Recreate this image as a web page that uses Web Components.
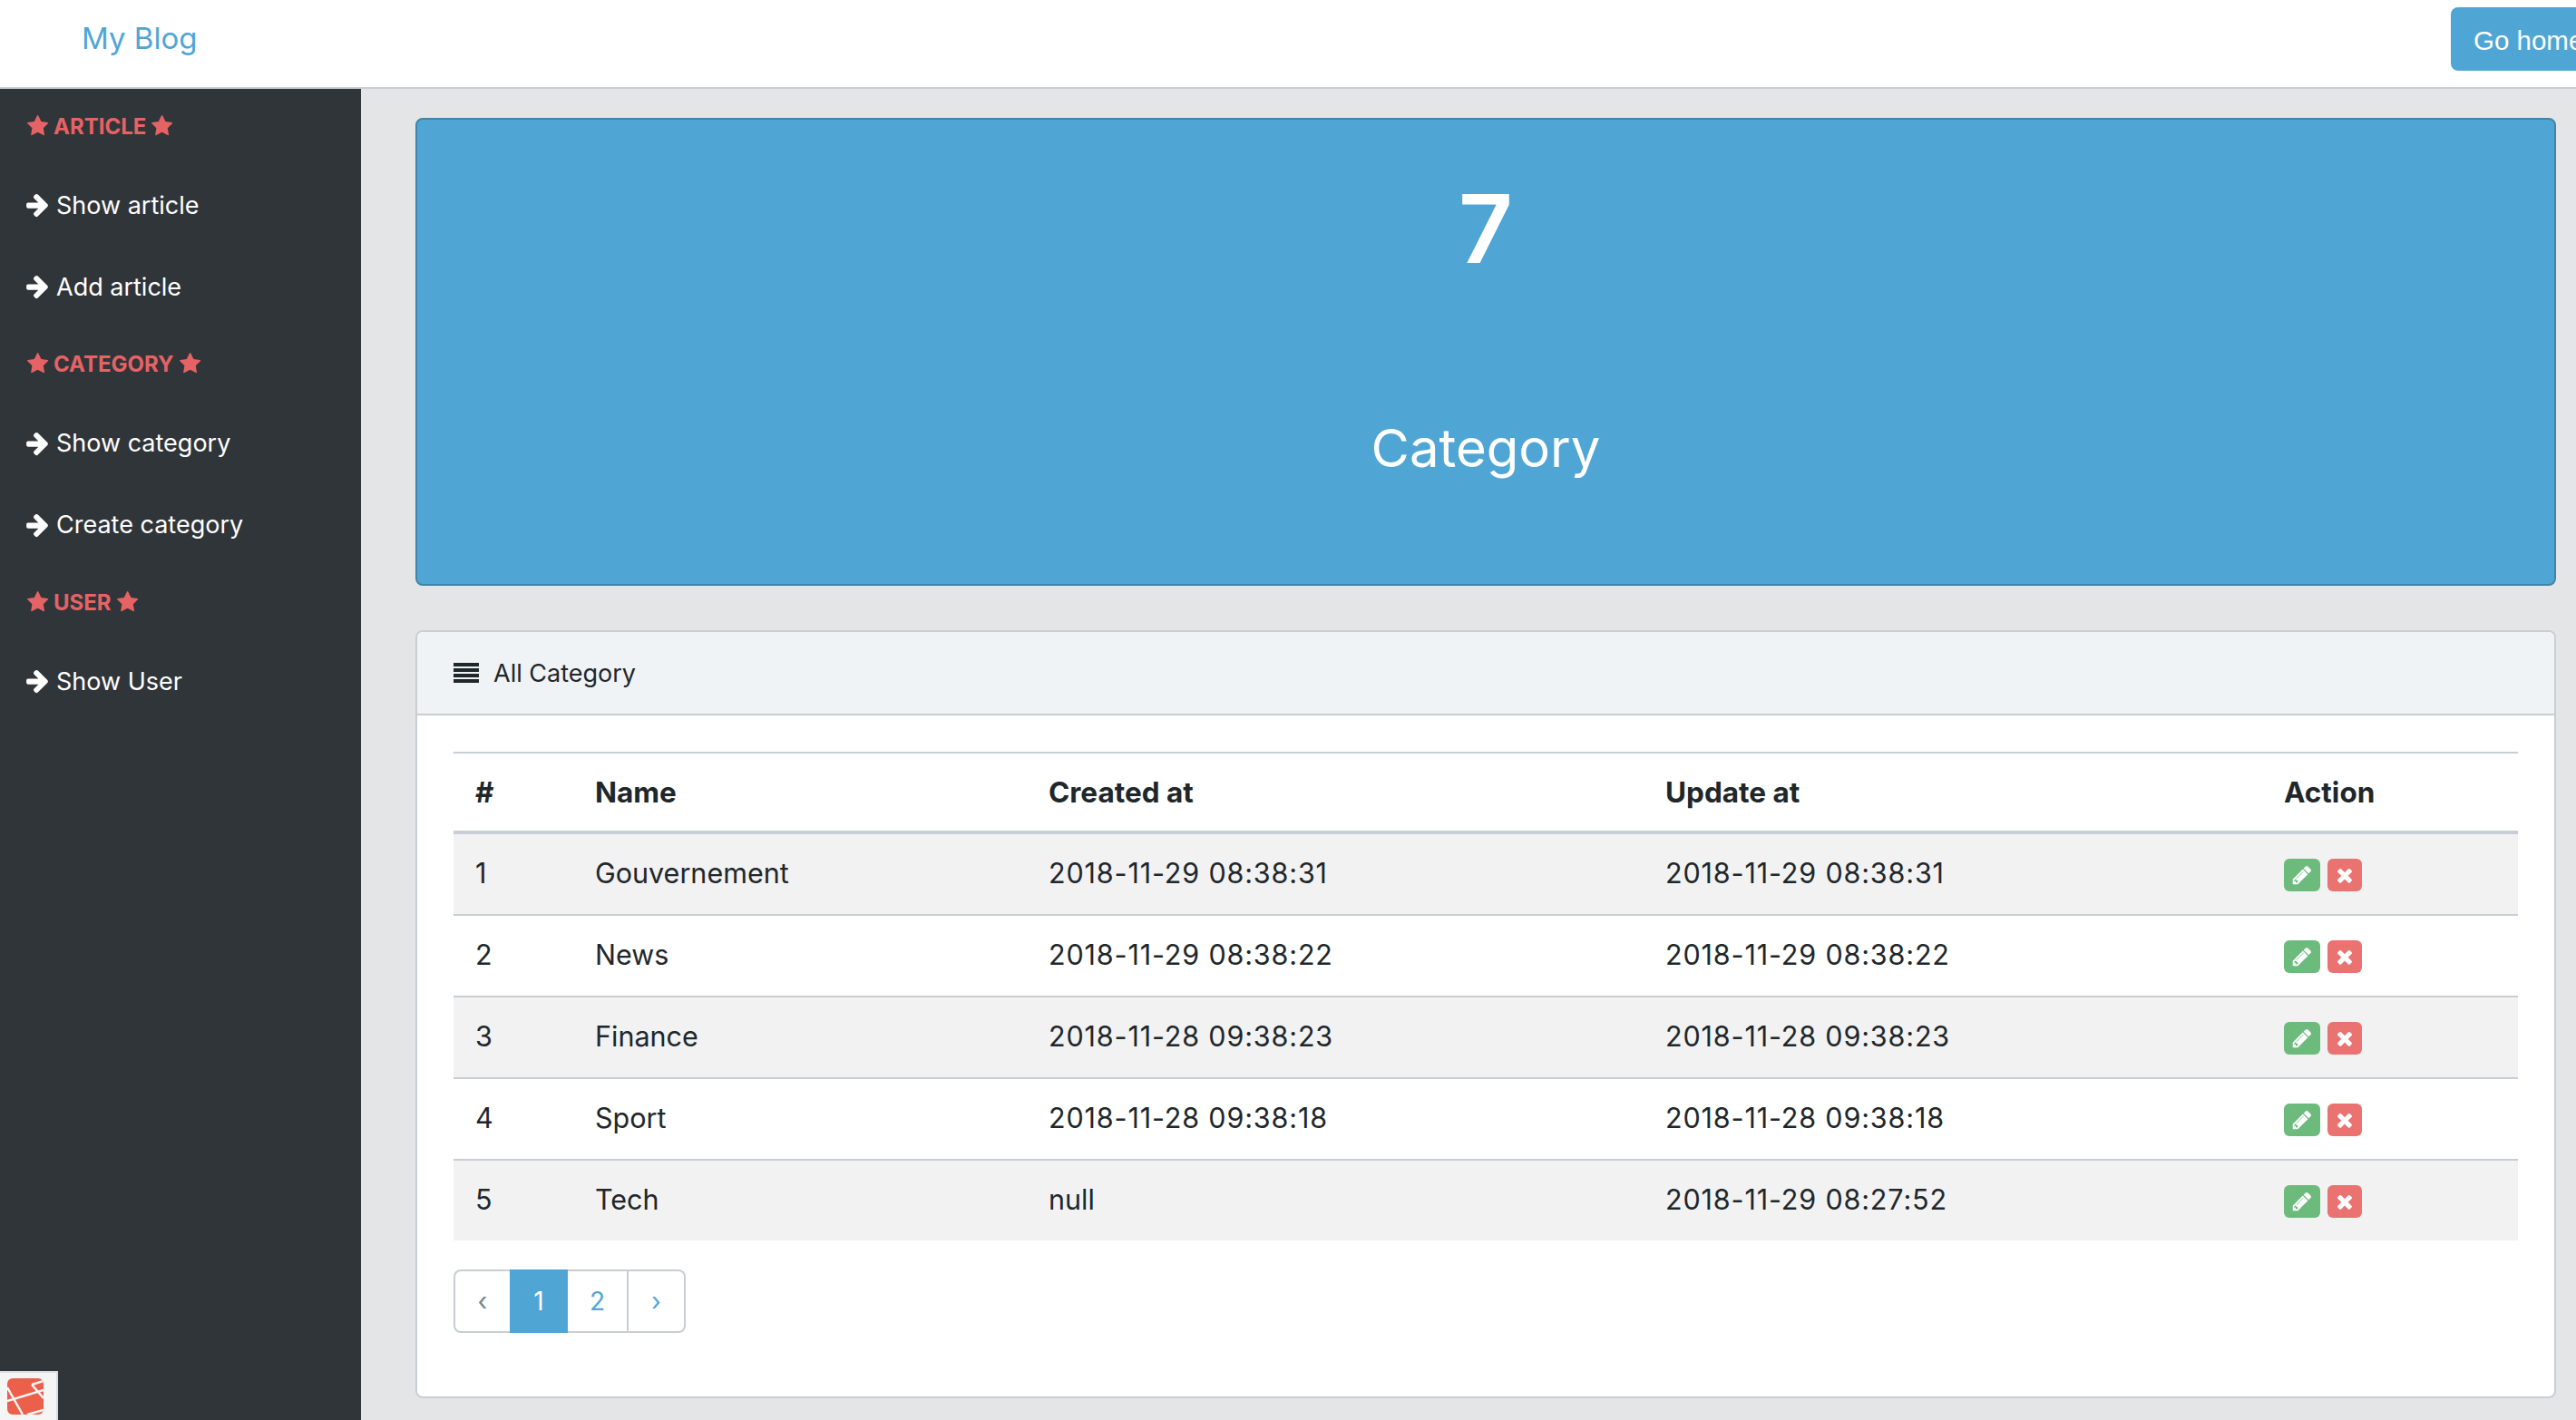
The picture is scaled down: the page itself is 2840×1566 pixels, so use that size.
<!DOCTYPE html>
<html lang="en">
<head>
<meta charset="utf-8">
<title>My Blog</title>
<style>
  html, body { margin: 0; height: 100%; overflow: hidden; }
  body { font-family: Inter, "Liberation Sans", sans-serif; background: #e4e5e6; color: #20272b; }
  .layout { display: flex; height: 1468px; }
</style>
</head>
<body>
<blog-header></blog-header>
<div class="layout">
  <blog-sidebar>
    <nav-title>ARTICLE</nav-title>
    <nav-link>Show article</nav-link>
    <nav-link>Add article</nav-link>
    <nav-title>CATEGORY</nav-title>
    <nav-link>Show category</nav-link>
    <nav-link>Create category</nav-link>
    <nav-title>USER</nav-title>
    <nav-link>Show User</nav-link>
  </blog-sidebar>
  <blog-main>
    <stat-hero value="7" label="Category"></stat-hero>
    <category-card></category-card>
  </blog-main>
</div>
<debug-tab></debug-tab>

<script>
const ICONS = {
  star: 'M1664 615q0 22-26 48l-363 354 86 500q1 7 1 20 0 21-10.500 35.500t-30.500 14.500q-19 0-40-12l-449-236-449 236q-22 12-40 12-21 0-31.500-14.500t-10.500-35.500q0-6 2-20l86-500-364-354q-25-27-25-48 0-37 56-46l502-73 225-455q19-41 49-41t49 41l225 455 502 73q56 9 56 46z',
  arrow: 'M1600 960q0 54-37 91l-651 651q-39 37-91 37-51 0-90-37l-75-75q-38-38-38-91t38-91l293-293h-704q-52 0-84.500-37.500t-32.500-90.500v-128q0-53 32.500-90.500t84.500-37.500h704l-293-294q-38-36-38-90t38-90l75-75q38-38 90-38 53 0 91 38l651 651q37 35 37 90z',
  pencil: 'M491 1536l91-91-235-235-91 91v107h128v128h107zm523-928q0-22-22-22-10 0-17 7l-542 542q-7 7-7 17 0 22 22 22 10 0 17-7l542-542q7-7 7-17zm-54-192l416 416-832 832h-416v-416zm683 96q0 53-37 90l-166 166-416-416 166-165q36-38 90-38 53 0 91 38l235 234q37 39 37 91z',
  times: 'M1490 1322q0 40-28 68l-136 136q-28 28-68 28t-68-28l-294-294-294 294q-28 28-68 28t-68-28l-136-136q-28-28-28-68t28-68l294-294-294-294q-28-28-28-68t28-68l136-136q28-28 68-28t68 28l294 294 294-294q28-28 68-28t68 28l136 136q28 28 28 68t-28 68l-294 294 294 294q28 28 28 68z',
};

function icon(name, size) {
  return `<svg width="${size}" height="${size}" viewBox="0 0 1792 1792" aria-hidden="true"><path fill="currentColor" d="${ICONS[name]}"/></svg>`;
}

class BlogHeader extends HTMLElement {
  constructor() {
    super();
    this.attachShadow({ mode: 'open' });
    this.shadowRoot.innerHTML = `
      <style>
        :host { display: flex; align-items: center; height: 96px; background: #fff; border-bottom: 2px solid #c8ced3; overflow: hidden; }
        .brand { margin-left: 90px; margin-top: -12px; font-size: 33px; color: #4ea6d5; }
        .btn { margin-left: auto; margin-right: -40px; margin-top: -10px; flex: none; width: 178px; height: 70px; box-sizing: border-box; padding-left: 25px; line-height: 74px; background: #4fa6d5; color: #fff; font-size: 29.500px; border-radius: 8px 0 0 8px; white-space: nowrap; font-family: "Liberation Sans", Arial, sans-serif; }
      </style>
      <span class="brand">My Blog</span>
      <span class="btn">Go home</span>
    `;
  }
}

class BlogSidebar extends HTMLElement {
  constructor() {
    super();
    this.attachShadow({ mode: 'open' });
    this.shadowRoot.innerHTML = `
      <style>
        :host { display: flex; flex-direction: column; flex: none; width: 398px; background: #303539; box-sizing: border-box; }
      </style>
      <slot></slot>
    `;
  }
}

class NavTitle extends HTMLElement {
  constructor() {
    super();
    this.attachShadow({ mode: 'open' });
    this.shadowRoot.innerHTML = `
      <style>
        :host { display: flex; align-items: center; gap: 4px; height: 82.600px; padding-left: 30px; color: #e56365; font-size: 24px; font-weight: 700; }
        svg + span + svg { margin-left: 2px; }
      </style>
      ${icon('star', 25)}<span><slot></slot></span>${icon('star', 25)}
    `;
  }
}

class NavLink extends HTMLElement {
  constructor() {
    super();
    this.attachShadow({ mode: 'open' });
    this.shadowRoot.innerHTML = `
      <style>
        :host { display: flex; align-items: center; gap: 6px; height: 90px; padding-left: 27px; color: #fff; font-size: 27px; }
        span { padding-top: 1px; }
      </style>
      ${icon('arrow', 29)}<span><slot></slot></span>
    `;
  }
}

class BlogMain extends HTMLElement {
  constructor() {
    super();
    this.attachShadow({ mode: 'open' });
    this.shadowRoot.innerHTML = `
      <style>
        :host { display: flex; flex-direction: column; flex: 1; gap: 49px; padding: 32px 22px 0 60px; min-width: 0; box-sizing: border-box; }
      </style>
      <slot></slot>
    `;
  }
}

class StatHero extends HTMLElement {
  constructor() {
    super();
    this.attachShadow({ mode: 'open' });
    const value = this.getAttribute('value');
    const label = this.getAttribute('label');
    this.shadowRoot.innerHTML = `
      <style>
        :host { display: flex; flex-direction: column; align-items: center; height: 516px; background: #4fa6d5; border: 2px solid #3f85aa; border-radius: 8px; box-sizing: border-box; color: #fff; }
        .value { margin-top: 60px; font-size: 104px; line-height: 120px; font-weight: 600; }
        .label { margin-top: 132px; font-size: 58px; line-height: 100px; }
      </style>
      <div class="value">${value}</div>
      <div class="label">${label}</div>
    `;
  }
}

class CategoryCard extends HTMLElement {
  constructor() {
    super();
    this.attachShadow({ mode: 'open' });
    const rows = [
      ['1', 'Gouvernement', '2018-11-29 08:38:31', '2018-11-29 08:38:31'],
      ['2', 'News', '2018-11-29 08:38:22', '2018-11-29 08:38:22'],
      ['3', 'Finance', '2018-11-28 09:38:23', '2018-11-28 09:38:23'],
      ['4', 'Sport', '2018-11-28 09:38:18', '2018-11-28 09:38:18'],
      ['5', 'Tech', 'null', '2018-11-29 08:27:52'],
    ];
    const body = rows.map(r => `
      <div class="row">
        ${r.map(c => `<div class="cell text${c.length > 10 && c.startsWith('2018') ? ' date' : ''}">${c}</div>`).join('')}
        <div class="cell actions">
          <span class="act edit">${icon('pencil', 24)}</span>
          <span class="act del">${icon('times', 24)}</span>
        </div>
      </div>`).join('');
    this.shadowRoot.innerHTML = `
      <style>
        :host { display: block; height: 847px; background: #fff; border: 2px solid #c8ced3; border-radius: 8px; box-sizing: border-box; font-size: 30.500px; }
        .head { display: flex; align-items: center; gap: 16px; height: 90px; padding: 0 0 0 40px; background: #f0f3f5; border-bottom: 2px solid #c8ced3; border-radius: 6px 6px 0 0; font-size: 27px; }
        .bars { display: grid; gap: 2px; width: 28px; }
        .bars i { display: block; height: 4px; background: #20272b; }
        .body { padding: 40px 40px 0; }
        .table { border-top: 2px solid #c8ced3; }
        .row { display: grid; grid-template-columns: 132px 500px 680px 682px 1fr; height: 90px; align-items: center; border-top: 2px solid #c8ced3; box-sizing: border-box; }
        .row.top { border-top: 0; height: 85px; font-weight: 700; font-size: 31.500px; }
        .row.top + .row { border-top-width: 4px; height: 92px; }
        .row:nth-child(even) { background: #f2f2f2; }
        .cell { padding-left: 24px; }
        .text { padding-bottom: 4px; }
        .date { letter-spacing: 0.850px; }
        .actions { display: flex; gap: 8px; padding-top: 2px; }
        .act { display: flex; align-items: center; justify-content: center; height: 36px; border-radius: 6px; color: #fff; }
        .edit { width: 40px; background: #6cbb7d; }
        .del { width: 38px; background: #ea7371; }
        .pager { display: flex; margin-top: 32px; width: 256px; height: 70px; font-size: 28px; color: #4fa6d5; }
        .pager span { display: flex; align-items: center; justify-content: center; box-sizing: border-box; border: 2px solid #c8ced3; }
        .p1 { width: 62px; border-right: 0 !important; border-radius: 8px 0 0 8px; color: #73818f; }
        .p2 { width: 64px; background: #4fa6d5; border-color: #4fa6d5 !important; color: #fff; }
        .p3 { width: 67px; border-left: 0 !important; }
        .p4 { width: 63px; border-left: 0 !important; border-radius: 0 8px 8px 0; }
      </style>
      <div class="head"><span class="bars"><i></i><i></i><i></i><i></i></span><span>All Category</span></div>
      <div class="body">
        <div class="table">
          <div class="row top">
            <div class="cell">#</div><div class="cell">Name</div><div class="cell">Created at</div><div class="cell">Update at</div><div class="cell">Action</div>
          </div>
          ${body}
        </div>
        <div class="pager"><span class="p1">‹</span><span class="p2">1</span><span class="p3">2</span><span class="p4">›</span></div>
      </div>
    `;
  }
}

class DebugTab extends HTMLElement {
  constructor() {
    super();
    this.attachShadow({ mode: 'open' });
    this.shadowRoot.innerHTML = `
      <style>
        :host { position: fixed; left: 0; bottom: 0; width: 64px; height: 54px; background: #f5f5f5; border-top: 2px solid #ddd; border-right: 2px solid #ddd; box-sizing: border-box; }
        svg { position: absolute; left: 8px; top: 6px; }
      </style>
      <svg width="40" height="40" viewBox="0 0 40 40">
        <clipPath id="logo-clip"><rect width="40" height="40" rx="6"/></clipPath>
        <g clip-path="url(#logo-clip)">
          <rect width="40" height="40" fill="#ec5f4a"/>
          <path d="M0 10 L17 40 M0 25 L40 13 M27 7 L40 3 M27 7 L40 22 M22 40 L40 35" stroke="#f5f5f5" stroke-width="2.500" fill="none"/>
        </g>
      </svg>
    `;
  }
}

customElements.define('blog-header', BlogHeader);
customElements.define('blog-sidebar', BlogSidebar);
customElements.define('nav-title', NavTitle);
customElements.define('nav-link', NavLink);
customElements.define('blog-main', BlogMain);
customElements.define('stat-hero', StatHero);
customElements.define('category-card', CategoryCard);
customElements.define('debug-tab', DebugTab);
</script>
</body>
</html>
